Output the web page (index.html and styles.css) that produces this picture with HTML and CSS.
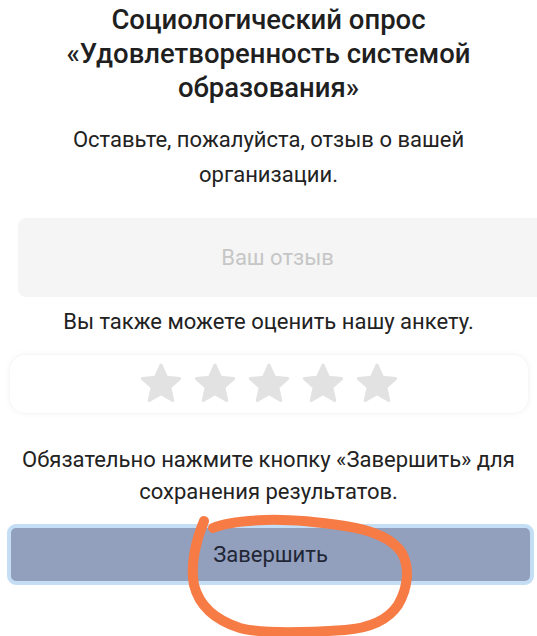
FILE: index.html
```html
<!DOCTYPE html>
<html lang="ru">
<head>
<meta charset="utf-8">
<title>Социологический опрос</title>
<link rel="stylesheet" href="styles.css">
</head>
<body>
<main class="page">
  <h1 class="title">Социологический опрос «Удовлетворенность системой образования»</h1>
  <p class="lead">Оставьте, пожалуйста, отзыв о вашей организации.</p>
  <div class="feedback">Ваш отзыв</div>
  <p class="note">Вы также можете оценить нашу анкету.</p>
  <div class="rating">
    <svg class="star" viewBox="0 0 24 24"><path d="M12 2.2l2.9 6.3 6.8.7-5.1 4.6 1.5 6.8L12 17.1l-6.1 3.5 1.5-6.8-5.1-4.6 6.8-.7z" stroke-linejoin="round" stroke-width="1.6"/></svg>
    <svg class="star" viewBox="0 0 24 24"><path d="M12 2.2l2.9 6.3 6.8.7-5.1 4.6 1.5 6.8L12 17.1l-6.1 3.5 1.5-6.8-5.1-4.6 6.8-.7z" stroke-linejoin="round" stroke-width="1.6"/></svg>
    <svg class="star" viewBox="0 0 24 24"><path d="M12 2.2l2.9 6.3 6.8.7-5.1 4.6 1.5 6.8L12 17.1l-6.1 3.5 1.5-6.8-5.1-4.6 6.8-.7z" stroke-linejoin="round" stroke-width="1.6"/></svg>
    <svg class="star" viewBox="0 0 24 24"><path d="M12 2.2l2.9 6.3 6.8.7-5.1 4.6 1.5 6.8L12 17.1l-6.1 3.5 1.5-6.8-5.1-4.6 6.8-.7z" stroke-linejoin="round" stroke-width="1.6"/></svg>
    <svg class="star" viewBox="0 0 24 24"><path d="M12 2.2l2.9 6.3 6.8.7-5.1 4.6 1.5 6.8L12 17.1l-6.1 3.5 1.5-6.8-5.1-4.6 6.8-.7z" stroke-linejoin="round" stroke-width="1.6"/></svg>
  </div>
  <p class="note note-save">Обязательно нажмите кнопку «Завершить» для сохранения результатов.</p>
  <button class="finish" type="button">Завершить</button>
</main>
<svg class="scribble" viewBox="0 0 537 636" aria-hidden="true">
  <path d="M204 521 C196 540 190 565 194 585 C199 605 215 620 240 628 C262 634 300 633 345 630 C370 628 388 620 398 605 C408 588 410 568 402 553 C392 538 372 530 345 526 C318 522 290 519 265 520 C240 521 222 524 213 528" />
</svg>
</body>
</html>
```

FILE: styles.css
```css
html, body {
  margin: 0;
  padding: 0;
  background: #ffffff;
}

body {
  font-family: Roboto, "Noto Sans", "Liberation Sans", sans-serif;
  color: #222222;
  width: 537px;
  height: 636px;
  overflow: hidden;
  position: relative;
}

.page {
  display: flex;
  flex-direction: column;
  align-items: center;
  padding: 3px 0 0;
}

.title {
  margin: 0;
  width: 450px;
  font-size: 27.5px;
  font-weight: 500;
  line-height: 34px;
  text-align: center;
  color: #1f1f1f;
}

.lead {
  margin: 17px 0 0;
  width: 502px;
  font-size: 22px;
  line-height: 35px;
  text-align: center;
}

.feedback {
  align-self: flex-end;
  width: 519px;
  height: 79px;
  margin-top: 26px;
  box-sizing: border-box;
  background: #f5f5f5;
  border-radius: 8px 0 0 8px;
  display: flex;
  align-items: center;
  justify-content: center;
  font-size: 22px;
  color: #c6c6c6;
}

.note {
  margin: 8px 0 0;
  width: 502px;
  font-size: 22px;
  line-height: 33px;
  text-align: center;
}

.rating {
  align-self: flex-start;
  margin: 17px 0 0 10px;
  width: 518px;
  height: 58px;
  background: #ffffff;
  border-radius: 15px;
  box-shadow: 0 0 7px rgba(0, 0, 0, 0.06), 0 0 2px rgba(0, 0, 0, 0.03);
  display: flex;
  justify-content: center;
  align-items: center;
  gap: 8px;
}

.star {
  width: 46px;
  height: 46px;
  fill: #e2e2e2;
  stroke: #e2e2e2;
}

.note-save {
  margin-top: 31px;
  line-height: 32px;
}

.finish {
  align-self: flex-start;
  margin: 16px 0 0 7px;
  width: 527px;
  height: 61px;
  box-sizing: border-box;
  border: 4px solid #c4def6;
  border-radius: 9px;
  background: #929fbd;
  font-family: Roboto, "Noto Sans", "Liberation Sans", sans-serif;
  font-size: 22px;
  color: #1f2635;
  padding: 0;
}

.scribble {
  position: absolute;
  left: 0;
  top: 0;
  width: 537px;
  height: 636px;
  pointer-events: none;
  fill: none;
  stroke: #f77b44;
  stroke-width: 10;
  stroke-linecap: round;
  stroke-linejoin: round;
}
```
